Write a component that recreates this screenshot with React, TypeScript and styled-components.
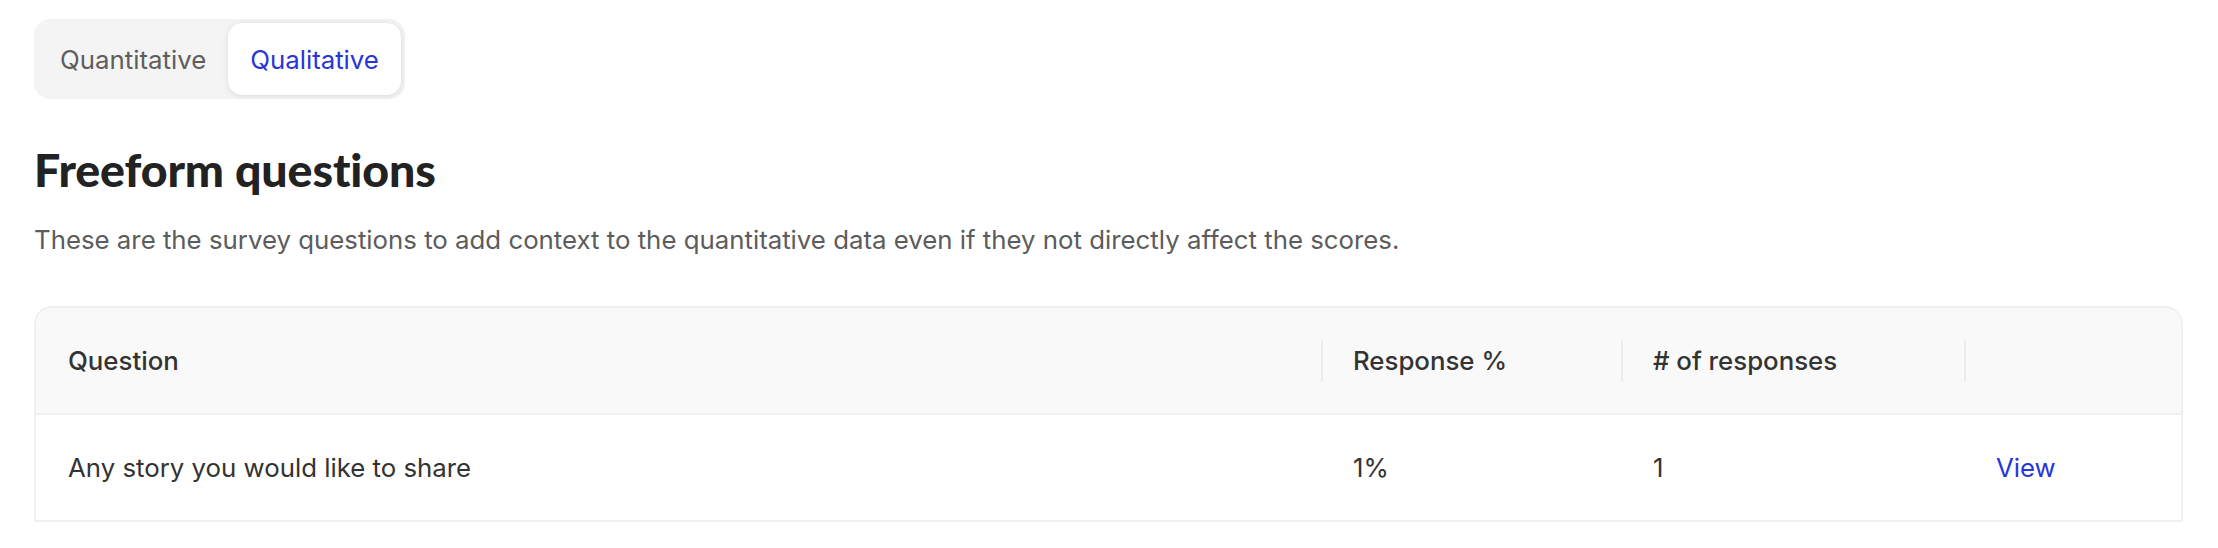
import React from "react";
import styled, { createGlobalStyle } from "styled-components";

const GlobalStyle = createGlobalStyle`
  body {
    margin: 0;
    background: #ffffff;
    font-family: Inter, "Liberation Sans", sans-serif;
    -webkit-font-smoothing: antialiased;
  }
`;

type Row = { question: string; percent: string; count: number };

const rows: Row[] = [
  { question: "Any story you would like to share", percent: "1%", count: 1 },
];

const Page = styled.div`
  padding: 19px 35px 0 34px;
`;

const Tabs = styled.div`
  display: inline-flex;
  padding: 4px;
  border-radius: 16px;
  background: #f4f4f4;
`;

const Tab = styled.button<{ $active?: boolean }>`
  height: 72px;
  padding: 0 22px;
  border: none;
  border-radius: 14px;
  font-family: Inter, "Liberation Sans", sans-serif;
  font-size: 25.8px;
  font-weight: 400;
  cursor: pointer;
  color: ${(p) => (p.$active ? "#2a35d8" : "#5e5e5e")};
  background: ${(p) => (p.$active ? "#ffffff" : "transparent")};
  box-shadow: ${(p) =>
    p.$active ? "0 1px 6px rgba(0, 0, 0, 0.1), 0 0 1px rgba(0, 0, 0, 0.08)" : "none"};
`;

const Title = styled.h2`
  margin: 42px 0 0 0;
  font-family: Lato, "Liberation Sans", sans-serif;
  font-size: 46.5px;
  font-weight: 900;
  line-height: 56px;
  letter-spacing: -0.1px;
  color: #222222;
`;

const Lead = styled.p`
  margin: 26px 0 0 0;
  font-size: 25.8px;
  line-height: 34px;
  color: #5c5c5c;
`;

const Table = styled.div`
  margin-top: 49px;
  border: 2px solid #f0f0f0;
  border-bottom: none;
  border-radius: 18px 18px 0 0;
  overflow: hidden;
`;

const Grid = styled.div<{ $head?: boolean }>`
  display: grid;
  grid-template-columns: 1fr 300px 343px 217px;
  height: 105px;
  align-items: center;
  background: ${(p) => (p.$head ? "#f9f9f9" : "#ffffff")};
  border-bottom: 2px solid #f0f0f0;
`;

const HeadCell = styled.div<{ $divider?: boolean }>`
  position: relative;
  padding: 0 32px;
  font-size: 25.8px;
  font-weight: 500;
  color: #333333;

  &::before {
    content: "";
    display: ${(p) => (p.$divider ? "block" : "none")};
    position: absolute;
    left: 0;
    top: 50%;
    width: 2px;
    height: 41px;
    transform: translateY(-50%);
    background: #ececec;
  }
`;

const Cell = styled.div`
  padding: 0 32px;
  font-size: 25.8px;
  font-weight: 400;
  color: #333333;
`;

const ViewLink = styled.a`
  font-size: 25.8px;
  color: #2a35d8;
  text-decoration: none;
  cursor: pointer;
`;

export default function App() {
  return (
    <>
      <GlobalStyle />
      <Page>
        <Tabs>
          <Tab>Quantitative</Tab>
          <Tab $active>Qualitative</Tab>
        </Tabs>

        <Title>Freeform questions</Title>
        <Lead>
          These are the survey questions to add context to the quantitative data even if they not
          directly affect the scores.
        </Lead>

        <Table>
          <Grid $head>
            <HeadCell>Question</HeadCell>
            <HeadCell $divider>Response %</HeadCell>
            <HeadCell $divider># of responses</HeadCell>
            <HeadCell $divider />
          </Grid>
          {rows.map((r) => (
            <Grid key={r.question}>
              <Cell>{r.question}</Cell>
              <Cell>{r.percent}</Cell>
              <Cell>{r.count}</Cell>
              <Cell>
                <ViewLink>View</ViewLink>
              </Cell>
            </Grid>
          ))}
        </Table>
      </Page>
    </>
  );
}
